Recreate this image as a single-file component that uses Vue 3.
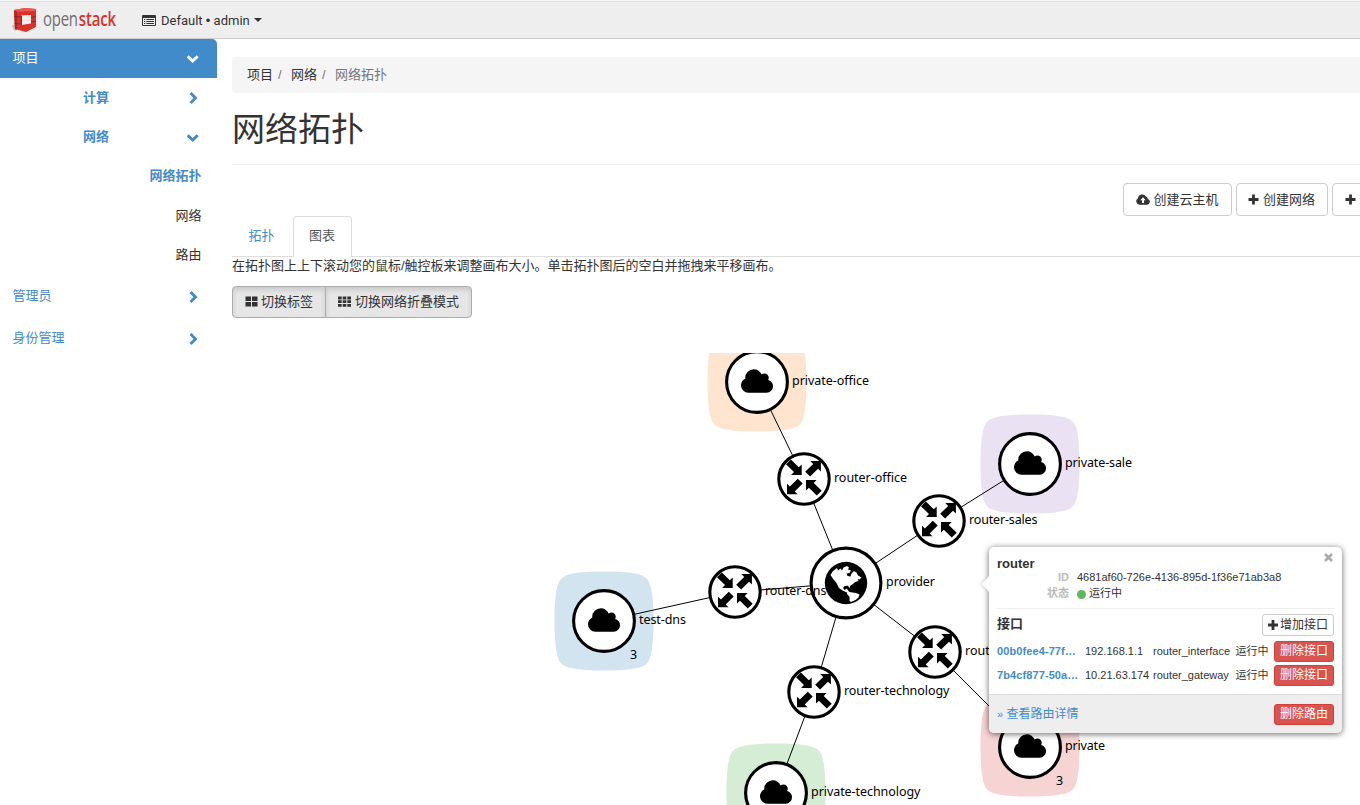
<script setup>
const blobPath =
  'M-49.5 0C-49.5 20-48 32-45.5 38Q-43.5 43.5-38 45.5C-32 48-20 49.5 0 49.5C20 49.5 32 48 38 45.5Q43.5 43.5 45.5 38C48 32 49.5 20 49.5 0C49.5-20 48-32 45.5-38Q43.5-43.5 38-45.5C32-48 20-49.5 0-49.5C-20-49.5-32-48-38-45.5Q-43.5-43.5-45.5-38C-48-32-49.5-20-49.5 0Z'
const cloudPath =
  'M1920 1152q0 159-112.5 271.5t-271.5 112.5h-1088q-185 0-316.5-131.5t-131.5-316.5q0-132 71-241.5t187-163.5q-2-28-2-43 0-212 150-362t362-150q158 0 286.5 88t187.5 230q70-62 166-62 106 0 181 75t75 181q0 75-41 138 129 30 213 134.5t84 239.5z'
const landPath =
  'M-15.5-8L-13-12L-9-15L-8-12.500L-5.500-14.500L-4-12.500L-2.500-15.500L1-17L3-15.500L2-13.500L5-12.500L3.500-10L.5-9.500L1.500-7L4.500-6.500L5.500-9.500L8-12L10.500-10.500L12-7.500L15.500-5.500L13.500-3.500L11.500-4L12.500-2L9-1L7 1L4.500 2.500L3.500 5L2 2.800L-1.500 3L-3 5L-1.500 7L1 5.500L2 7.500L3.500 9L6.500 9.500L10 10L13.500 11.500L12.500 14.500L9.500 17L5 19L3.500 18L3.500 14L1 11L1 9.500L-3.500 7.500L-7 5L-9.500 0L-12-3L-13.500-5Z'
const arrow = '0,0 0,-10.6 -2.9,-7.7 -10.8,-15.6 -15.7,-10.7 -7.7,-2.9 -10.6,0'

const networks = [
  { name: 'private-office', x: 757, y: 382, color: '#ff7f0e', w: 77 },
  { name: 'private-sale', x: 1030, y: 464, color: '#9467bd', w: 67 },
  { name: 'test-dns', x: 604, y: 621, color: '#1f77b4', w: 47, count: 3 },
  { name: 'private', x: 1030, y: 747, color: '#d62728', w: 40, count: 3 },
  { name: 'private-technology', x: 776, y: 793, color: '#2ca02c', w: 109.5 },
]
const routers = [
  { name: 'router-office', x: 804, y: 479, w: 73, net: 0 },
  { name: 'router-sales', x: 939, y: 521, w: 68.5, net: 1 },
  { name: 'router-dns', x: 735, y: 592, w: 61.5, net: 2 },
  { name: 'router', x: 935, y: 652, w: 37, net: 3 },
  { name: 'router-technology', x: 814, y: 692, w: 105.5, net: 4 },
]
const hub = { x: 846, y: 583 }

const ports = [
  { id: '00b0fee4-77f…', ip: '192.168.1.1', kind: 'router_interface' },
  { id: '7b4cf877-50a…', ip: '10.21.63.174', kind: 'router_gateway' },
]
const menu = [
  { label: '项目', cls: 'top active', chev: 'down' },
  { label: '计算', cls: 'group', chev: 'right' },
  { label: '网络', cls: 'group', chev: 'down' },
  { label: '网络拓扑', cls: 'leaf current' },
  { label: '网络', cls: 'leaf' },
  { label: '路由', cls: 'leaf' },
  { label: '管理员', cls: 'top', chev: 'right' },
  { label: '身份管理', cls: 'top', chev: 'right' },
]
</script>

<template>
  <div class="page">
    <header class="bar">
      <svg class="logo" width="112" height="32" viewBox="0 0 112 32">
        <path d="M1 23 L5 20 V28 L3 27Z" fill="#bdbdbd" />
        <path d="M3 7 L14 5 L25 6 V24 L15 29 L4 26Z" fill="#d9322b" />
        <path d="M3 7 L6 8.500 V27 L4 26Z" fill="#b02622" />
        <path d="M3 7 L14 5 L25 6 L24 8 L6 8.500Z" fill="#ef5a50" />
        <path d="M10 12.500 L20 12 V20.500 L10.500 22Z" fill="#f3eeee" />
        <path d="M9.500 12.500 L11 13 V21.800 L9.800 22.400Z" fill="#a32321" />
        <path d="M3.500 13.500 L9 14 M3.500 20.500 L9 21 M20 14.500 L25 13.500 M20 19 L25 18.500" stroke="#8f1d1b" stroke-width=".9" />
        <g transform="translate(32 23) scale(.73 1)">
          <text class="word" fill="#6f7072" textLength="48">open</text>
          <text x="49" class="word heavy" fill="#d8332b" textLength="51">stack</text>
        </g>
      </svg>
      <svg class="domain" width="14" height="11" viewBox="0 0 14 11">
        <path fill-rule="evenodd" d="M1 0H13Q14 0 14 1V10Q14 11 13 11H1Q0 11 0 10V1Q0 0 1 0ZM1 3V10H13V3Z" fill="#333" />
        <path d="M2 4.500H3.300M4.300 4.500H12M2 6.500H3.300M4.300 6.500H12M2 8.500H3.300M4.300 8.500H12" stroke="#333" />
      </svg>
      <span class="ctx">Default <b>•</b> admin</span>
      <i class="caret"></i>
    </header>

    <div class="body">
      <nav class="side">
        <a v-for="(m, i) in menu" :key="i" class="item" :class="m.cls">
          <span>{{ m.label }}</span>
          <svg v-if="m.chev === 'right'" class="chev" width="13" height="13" viewBox="0 0 13 13"><path d="M3.500 1 8.500 6 3.500 11" /></svg>
          <svg v-else-if="m.chev" class="chev" width="13" height="13" viewBox="0 0 13 13"><path d="M.7 4.300 5.700 9 10.700 4.300" /></svg>
        </a>
      </nav>

      <main class="main">
        <div class="crumbs"><span>项目</span><i>/</i><span>网络</span><i>/</i><span class="here">网络拓扑</span></div>
        <h1>网络拓扑</h1>
        <div class="actions">
          <button class="btn">
            <svg width="14" height="11" viewBox="0 0 14 11">
              <path d="M3.500 10.800A3.500 3.500 0 0 1 2 4.300 4.300 4.300 0 0 1 10 2.600 3 3 0 0 1 11.900 5 3 3 0 0 1 11 10.800Z" fill="#333" />
              <path d="M7 3.200 4.300 6.300H6V9H8V6.300H9.700Z" fill="#fff" />
            </svg>创建云主机</button>
          <button class="btn"><svg width="11" height="11" viewBox="0 0 11 11"><path d="M5.500 .5V10.500M.5 5.500H10.500" stroke="#333" stroke-width="2.800" /></svg>创建网络</button>
          <button class="btn"><svg width="11" height="11" viewBox="0 0 11 11"><path d="M5.500 .5V10.500M.5 5.500H10.500" stroke="#333" stroke-width="2.800" /></svg>新建路由</button>
        </div>
        <div class="tabs"><a class="tab">拓扑</a><a class="tab on">图表</a></div>
        <p class="hint">在拓扑图上上下滚动您的鼠标/触控板来调整画布大小。单击拓扑图后的空白并拖拽来平移画布。</p>
        <div class="group-btns">
          <button class="toggle">
            <svg width="13" height="11" viewBox="0 0 13 11"><path d="M.5 .5H6V5H.5ZM7 .5H12.500V5H7ZM.5 6H6V10.500H.5ZM7 6H12.500V10.500H7Z" fill="#333" /></svg>切换标签</button>
          <button class="toggle">
            <svg width="13" height="11" viewBox="0 0 13 11"><path d="M0 .5H3.700V3.500H0ZM4.700 .5H8.300V3.500H4.700ZM9.300 .5H13V3.500H9.300ZM0 4.300H3.700V7H0ZM4.700 4.300H8.300V7H4.700ZM9.300 4.300H13V7H9.300ZM0 8H3.700V10.800H0ZM4.700 8H8.300V10.800H4.700ZM9.300 8H13V10.800H9.300Z" fill="#333" /></svg>切换网络折叠模式</button>
        </div>

        <svg class="canvas" width="1128" height="452" viewBox="232 353 1128 452">
          <path v-for="n in networks" :key="'b' + n.name" :d="blobPath" :fill="n.color" fill-opacity=".2" :transform="`translate(${n.x} ${n.y})`" />
          <g stroke="#000" stroke-width="1">
            <template v-for="r in routers" :key="'l' + r.name">
              <line :x1="r.x" :y1="r.y" :x2="hub.x" :y2="hub.y" />
              <line :x1="r.x" :y1="r.y" :x2="networks[r.net].x" :y2="networks[r.net].y" />
            </template>
          </g>
          <g :transform="`translate(${hub.x} ${hub.y})`">
            <circle r="34.900" class="ring" />
            <circle r="21.200" />
            <path :d="landPath" fill="#fff" />
            <text x="40" y="3" textLength="49">provider</text>
          </g>
          <g v-for="n in networks" :key="n.name" :transform="`translate(${n.x} ${n.y})`">
            <circle r="30.400" class="ring" />
            <path :d="cloudPath" transform="scale(.0167) translate(-960 -896)" />
            <text x="35" y="3" :textLength="n.w">{{ n.name }}</text>
            <text v-if="n.count" x="26" y="38">{{ n.count }}</text>
          </g>
          <g v-for="r in routers" :key="r.name" :transform="`translate(${r.x} ${r.y})`">
            <circle r="25.200" class="ring" />
            <polygon :points="arrow" transform="translate(-2.300 -4)" />
            <polygon :points="arrow" transform="translate(16.900 -18) scale(1 -1)" />
            <polygon :points="arrow" transform="translate(2 1) scale(-1 -1)" />
            <polygon :points="arrow" transform="translate(-17 15.300) scale(-1 1)" />
            <text x="30" y="3" :textLength="r.w">{{ r.name }}</text>
          </g>
        </svg>
      </main>
    </div>

    <section class="pop">
      <i class="tip"></i>
      <svg class="close" width="9" height="9" viewBox="0 0 9 9"><path d="M1 1 8 8M8 1 1 8" stroke="#aaa" stroke-width="2.600" /></svg>
      <div class="info">
        <h2>router</h2>
        <dl><dt>ID</dt><dd>4681af60-726e-4136-895d-1f36e71ab3a8</dd></dl>
        <dl><dt>状态</dt><dd><i class="dot"></i>运行中</dd></dl>
      </div>
      <div class="ports">
        <div class="ports-head">
          <h3>接口</h3>
          <button class="small"><svg width="10" height="10" viewBox="0 0 10 10"><path d="M5 0V10M0 5H10" stroke="#333" stroke-width="2.800" /></svg>增加接口</button>
        </div>
        <div v-for="p in ports" :key="p.id" class="port">
          <a>{{ p.id }}</a><span>{{ p.ip }}</span><span>{{ p.kind }}</span><span>运行中</span><button class="small red">删除接口</button>
        </div>
      </div>
      <footer class="foot"><a><small>»</small> 查看路由详情</a><button class="small red">删除路由</button></footer>
    </section>
  </div>
</template>

<style>
html, body { background: #fff; overflow: hidden; }
</style>

<style scoped>
* { box-sizing: border-box; }
i { font-style: normal; }
button { font-family: inherit; margin: 0; white-space: nowrap; }
.page { position: relative; width: 1360px; height: 805px; overflow: hidden; font: 13px/18px "Liberation Sans", "Noto Sans CJK SC", sans-serif; color: #333; }
.bar { height: 39px; background: #eee; border-top: 1px solid #f8f8f8; border-bottom: 1px solid #ccc; box-shadow: inset 0 1px #ddd; display: flex; align-items: center; padding-left: 11px; }
.logo { margin-top: -1px; }
.word { font-family: "Open Sans", "Noto Sans", sans-serif; font-size: 20.500px; }
.heavy { font-weight: 600; }
.domain { margin-left: 19px; margin-top: 1px; }
.ctx { font: 13px/18px Roboto, "Liberation Sans", sans-serif; margin-left: 5px; margin-top: 2px; width: 89px; white-space: nowrap; letter-spacing: 0; }
.ctx b { font: 13px/16px "Liberation Sans", sans-serif; }
.caret { margin-left: 4px; margin-top: 1px; border: 4px solid transparent; border-top-color: #333; border-bottom: 0; }
.body { display: flex; }
.side { width: 217px; flex: none; }
.item { display: flex; align-items: center; height: 39.300px; color: #428bca; padding: 0 17px 0 12.500px; }
.item span { line-height: 18px; }
.top { height: 42px; padding-top: 2px; }
.top.active { height: 39px; padding-top: 0; padding-bottom: 2px; background: #428bca; color: #fff; border-top-right-radius: 5px; }
.chev { margin-left: auto; margin-top: 2px; fill: none; stroke: currentColor; stroke-width: 2.900; }
.group { padding-left: 83px; font-weight: bold; }
.leaf { justify-content: flex-end; padding-right: 15.500px; color: #333; }
.current { color: #428bca; font-weight: bold; }
.main { flex: 1; min-width: 0; padding: 18px 0 0 15px; overflow: hidden; }
.crumbs { height: 36px; background: #f5f5f5; border-radius: 4px 0 0 4px; padding: 9px 15px; display: flex; line-height: 17px; }
.crumbs i { color: #777; padding: 0 9.300px 0 5px; }
.crumbs .here { color: #777; }
h1 { margin: 16px 0 0; font-size: 33px; font-weight: 400; line-height: 41px; height: 56px; border-bottom: 1px solid #eee; }
.actions { margin-top: 18px; display: flex; gap: 4px; padding-left: 891px; height: 33px; }
.btn { flex: none; height: 33px; border: 1px solid #ccc; border-radius: 4px; background: #fff; color: #333; font-size: 13px; padding: 0 12px 2px 11.500px; display: flex; align-items: center; gap: 4px; }
.btn svg { margin-top: 1px; }
.tabs { display: flex; height: 41px; border-bottom: 1px solid #ddd; }
.tab { color: #428bca; padding: 11px 16px 0 16.500px; height: 41px; }
.tab.on { margin-left: 2.500px; color: #555; border: 1px solid #ddd; border-bottom: 0; background: #fff; border-radius: 4px 4px 0 0; padding: 10px 15px 0; width: 59px; }
.hint { margin: 0; height: 29px; line-height: 18px; white-space: nowrap; }
.group-btns { display: flex; height: 32px; margin-bottom: 35px; }
.toggle { height: 32px; border: 1px solid #adadad; background: #e6e6e6; box-shadow: inset 0 3px 5px rgba(0, 0, 0, .125); color: #333; font-size: 13px; padding: 0 12px 3px; display: flex; align-items: center; gap: 3px; }
.toggle svg { margin-top: 1px; }
.toggle:first-child { border-radius: 4px 0 0 4px; }
.toggle:last-child { border-radius: 0 4px 4px 0; margin-left: -1px; gap: 4px; }
.canvas { display: block; }
.canvas text { font: 12.500px "Noto Sans", "Open Sans", sans-serif; fill: #000; }
.ring { fill: #fff; stroke: #000; stroke-width: 3.100; }

.pop { position: absolute; left: 989px; top: 547px; width: 353px; height: 186px; background: #fff; border-radius: 5px; box-shadow: 0 1px 6px rgba(0, 0, 0, .6); font-size: 11px; line-height: 16px; display: flex; flex-direction: column; }
.tip { position: absolute; left: -8px; top: 29px; border: 8px solid transparent; border-right-color: #fff; border-left: 0; filter: drop-shadow(-1px 0 1px rgba(0, 0, 0, .18)); }
.close { position: absolute; right: 9px; top: 6px; }
.info { margin: 0 8px; padding-top: 7px; height: 62px; border-bottom: 1px solid #eee; }
h2 { margin: 0; font-size: 13px; line-height: 19px; height: 15px; }
dl { margin: 0; display: flex; height: 16px; }
dt { width: 72px; text-align: right; font-weight: bold; color: #bbb; margin-right: 8px; }
dd { margin: 0; display: flex; align-items: center; white-space: nowrap; }
.dot { width: 9px; height: 9px; border-radius: 50%; background: #5cb85c; margin-right: 3px; margin-top: 2px; }
.ports { flex: 1; padding: 5px 8px 0; }
.ports-head { display: flex; justify-content: space-between; height: 26px; }
h3 { margin: 0; font-size: 13px; line-height: 19px; }
.small { height: 22px; border: 1px solid #ccc; border-radius: 3px; background: #fff; color: #333; font-size: 12px; line-height: 18px; padding: 0 5px; display: flex; align-items: center; gap: 2px; }
.small.red { background: #d9534f; border-color: #d43f3a; color: #fff; height: 21px; padding-bottom: 1px; }
.port { display: grid; grid-template-columns: 88px 68px 82.500px 38.500px 60px; height: 24px; align-items: center; white-space: nowrap; padding-bottom: 2px; }
.port a { color: #428bca; font-weight: bold; letter-spacing: .1px; }
.foot { height: 39px; background: #eee; border-top: 1px solid #ddd; border-radius: 0 0 5px 5px; padding: 0 8px; display: flex; align-items: center; justify-content: space-between; font-size: 12px; }
.foot a { color: #428bca; }
.foot small { font-size: 11px; }
</style>
